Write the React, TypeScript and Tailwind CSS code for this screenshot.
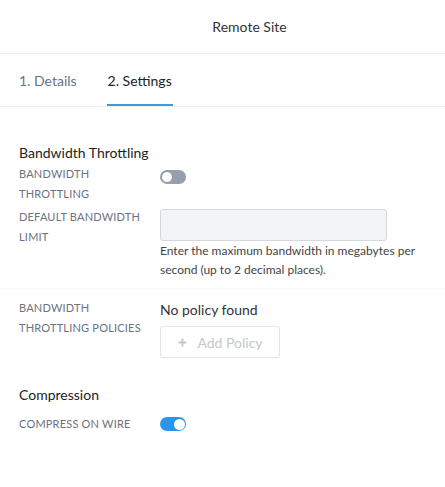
import { Plus } from 'lucide-react';

function Toggle({ on }: { on: boolean }) {
  return (
    <div
      className={
        on
          ? 'flex h-[14px] w-[26px] items-center justify-end rounded-full bg-[#2a95ee] p-[1.5px]'
          : 'flex h-[14px] w-[26px] items-center justify-start rounded-full bg-[#979eae] p-[1px]'
      }
    >
      <div
        className={
          on
            ? 'h-[11px] w-[11px] rounded-full bg-white'
            : 'h-[12px] w-[12px] rounded-full border border-[#8d94a3] bg-white'
        }
      />
    </div>
  );
}

function Label({ children }: { children: React.ReactNode }) {
  return (
    <div className="w-[141px] shrink-0 text-[11px] uppercase leading-[20px] tracking-[0.2px] text-[#6b7280]">
      {children}
    </div>
  );
}

export default function App() {
  return (
    <div
      className="h-[487px] w-[445px] bg-white text-[#333]"
      style={{ fontFamily: 'Lato, "Noto Sans", sans-serif' }}
    >
      <div className="flex h-[54px] items-center justify-center border-b border-[#eef0f3] pl-[54px] text-[14px] text-[#333]">
        Remote Site
      </div>

      <div className="flex h-[53px] gap-[31px] border-b border-[#eef0f3] px-[19px] text-[14px]">
        <div className="flex items-center pt-[1px] text-[#687587]">1. Details</div>
        <div className="flex flex-col justify-center">
          <div className="flex flex-1 items-center pt-[3px] text-[#222]">2. Settings</div>
          <div className="-mx-[1px] h-[2px] bg-[#3a9de4]" />
        </div>
      </div>

      <div className="px-[19px] pt-[36px]">
        <div className="text-[14px] leading-[20px] text-[#222]">Bandwidth Throttling</div>

        <div className="mt-[1px] flex">
          <Label>
            Bandwidth
            <br />
            Throttling
          </Label>
          <div className="mt-[6px]">
            <Toggle on={false} />
          </div>
        </div>

        <div className="mt-[3px] flex">
          <Label>
            Default Bandwidth
            <br />
            Limit
          </Label>
          <div className="pt-[2px]">
            <div className="h-[32px] w-[227px] rounded-[3px] border border-[#d5d7db] bg-[#f3f4f5]" />
            <div className="text-[12px] leading-[19px] text-[#444]">
              Enter the maximum bandwidth in megabytes per
              <br />
              second (up to 2 decimal places).
            </div>
          </div>
        </div>
      </div>

      <div className="mt-[9px] border-b border-[#f9f8f4]" />

      <div className="px-[19px] pt-[9px]">
        <div className="flex">
          <Label>
            Bandwidth
            <br />
            Throttling Policies
          </Label>
          <div className="pt-[2px]">
            <div className="text-[14px] leading-[20px] text-[#333]">No policy found</div>
            <button className="mt-[6px] flex h-[32px] w-[120px] items-center justify-center gap-[9px] rounded-[3px] border border-[#e2e4e8] bg-white text-[14px] text-[#c3c7ce]">
              <Plus className="h-[11px] w-[11px]" strokeWidth={4} />
              Add Policy
            </button>
          </div>
        </div>

        <div className="mt-[27px] text-[14px] leading-[20px] text-[#222]">Compression</div>

        <div className="mt-[9px] flex">
          <Label>Compress on Wire</Label>
          <div className="mt-[3px]">
            <Toggle on={true} />
          </div>
        </div>
      </div>
    </div>
  );
}
